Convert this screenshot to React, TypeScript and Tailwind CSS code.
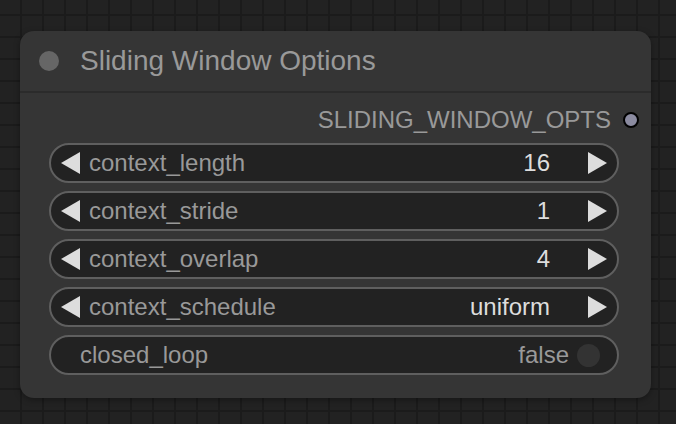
import type { ReactNode } from "react";

const FONT = "font-['Liberation_Sans',Arial,sans-serif]";

type ComboProps = {
  label: string;
  value: string;
};

function LeftArrow() {
  return (
    <svg width="20" height="22" viewBox="0 0 20 22" className="shrink-0">
      <polygon points="19,0 19,22 0,11" fill="#dddddd" />
    </svg>
  );
}

function RightArrow() {
  return (
    <svg width="20" height="22" viewBox="0 0 20 22" className="shrink-0">
      <polygon points="1,0 1,22 20,11" fill="#dddddd" />
    </svg>
  );
}

function WidgetShell({ children }: { children: ReactNode }) {
  return (
    <div className="flex h-[40px] items-center rounded-full border-2 border-[#5f5f5f] bg-[#222222]">
      {children}
    </div>
  );
}

function NumberWidget({ label, value }: ComboProps) {
  return (
    <WidgetShell>
      <div className="ml-[10px]">
        <LeftArrow />
      </div>
      <span className="ml-[8px] text-[24px] text-[#999999]">{label}</span>
      <span className="ml-auto text-[24px] text-[#dddddd]">{value}</span>
      <div className="ml-[37px] mr-[10px]">
        <RightArrow />
      </div>
    </WidgetShell>
  );
}

function ToggleWidget({ label, value }: ComboProps) {
  return (
    <WidgetShell>
      <span className="ml-[29px] text-[24px] text-[#999999]">{label}</span>
      <span className="ml-auto text-[24px] text-[#999999]">{value}</span>
      <span className="ml-[8px] mr-[17px] h-[23px] w-[23px] rounded-full bg-[#333333]" />
    </WidgetShell>
  );
}

export default function App() {
  const widgets: ComboProps[] = [
    { label: "context_length", value: "16" },
    { label: "context_stride", value: "1" },
    { label: "context_overlap", value: "4" },
    { label: "context_schedule", value: "uniform" },
  ];

  return (
    <div
      className={`h-[424px] w-[676px] overflow-hidden bg-[#222222] bg-[linear-gradient(to_right,#1b1b1b_2px,transparent_2px),linear-gradient(to_bottom,#1b1b1b_2px,transparent_2px)] bg-[size:22px_22px] bg-[position:20px_14px] pl-[20px] pt-[31px] ${FONT}`}
    >
      <div className="flex h-[367px] w-[631px] flex-col rounded-[14px] bg-[#353535] shadow-[0_2px_6px_rgba(0,0,0,0.35)]">
        <div className="flex h-[62px] items-center border-b-2 border-[#2b2b2b] pb-[1px]">
          <span className="ml-[19px] h-[20px] w-[20px] rounded-full bg-[#666666]" />
          <span className="ml-[21px] text-[28px] text-[#999999]">Sliding Window Options</span>
        </div>

        <div className="flex h-[50px] items-center justify-end pt-[4px]">
          <span className="text-[24px] text-[#999999]">SLIDING_WINDOW_OPTS</span>
          <span className="ml-[12px] mr-[12px] h-[16px] w-[16px] rounded-full border-2 border-black bg-[#8b8ba0]" />
        </div>

        <div className="ml-[29px] mr-[32px] flex flex-col gap-[8px]">
          {widgets.map((w) => (
            <NumberWidget key={w.label} label={w.label} value={w.value} />
          ))}
          <ToggleWidget label="closed_loop" value="false" />
        </div>
      </div>
    </div>
  );
}
